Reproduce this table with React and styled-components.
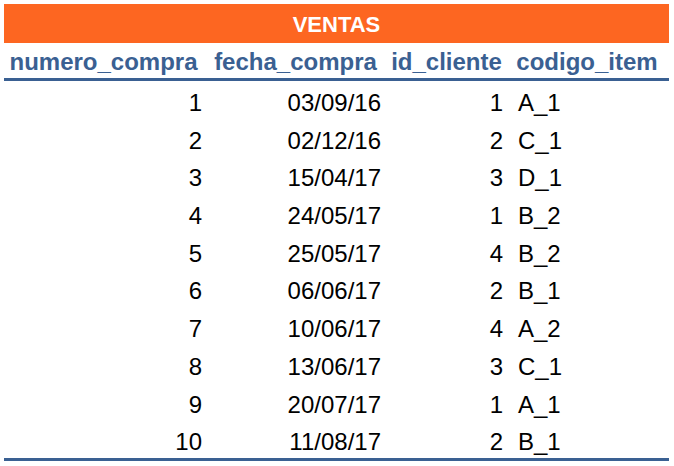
import React from 'react';
import styled, { createGlobalStyle } from 'styled-components';

const GlobalStyle = createGlobalStyle`
  html, body {
    margin: 0;
    padding: 0;
    background: #ffffff;
  }
  body {
    font-family: "Liberation Sans", Arial, sans-serif;
  }
`;

const ventas = [
  [1, '03/09/16', 1, 'A_1'],
  [2, '02/12/16', 2, 'C_1'],
  [3, '15/04/17', 3, 'D_1'],
  [4, '24/05/17', 1, 'B_2'],
  [5, '25/05/17', 4, 'B_2'],
  [6, '06/06/17', 2, 'B_1'],
  [7, '10/06/17', 4, 'A_2'],
  [8, '13/06/17', 3, 'C_1'],
  [9, '20/07/17', 1, 'A_1'],
  [10, '11/08/17', 2, 'B_1'],
];

const headers = ['numero_compra', 'fecha_compra', 'id_cliente', 'codigo_item'];

// alineacion de cada columna en las filas de datos
const cols = [
  { align: 'right', pad: '0 1px 0 0' },
  { align: 'right', pad: '0 7px 0 0' },
  { align: 'right', pad: '0 2px 0 0' },
  { align: 'left', pad: '0 0 0 13px' },
];

const App = () => {
  return (
    <Page>
      <GlobalStyle />
      <Sheet>
        <Title>VENTAS</Title>
        <Table>
          <HeaderRow>
            {headers.map((h) => (
              <HeaderCell key={h}>{h}</HeaderCell>
            ))}
          </HeaderRow>
          <Body>
            {ventas.map((row) => (
              <Row key={row[0]}>
                {row.map((value, i) => (
                  <Cell key={i} align={cols[i].align} pad={cols[i].pad}>
                    {value}
                  </Cell>
                ))}
              </Row>
            ))}
          </Body>
        </Table>
      </Sheet>
    </Page>
  );
};

const Page = styled.div`
  width: 674px;
  height: 466px;
  padding: 4px 5px 0 4px;
  box-sizing: border-box;
  background: #ffffff;
`;

const Sheet = styled.div`
  width: 665px;
  display: flex;
  flex-direction: column;
`;

const Title = styled.div`
  height: 39px;
  box-sizing: border-box;
  padding-top: 2px;
  line-height: 37px;
  background: #fd6621;
  color: #ffffff;
  font-size: 22px;
  font-weight: bold;
  text-align: center;
`;

const Table = styled.div`
  display: flex;
  flex-direction: column;
`;

const gridCols = `
  display: grid;
  grid-template-columns: 199px 185px 117px 164px;
`;

const HeaderRow = styled.div`
  ${gridCols}
  padding-top: 2px;
  border-bottom: 3px solid #3a6092;
`;

const HeaderCell = styled.div`
  line-height: 33px;
  font-size: 24px;
  font-weight: bold;
  color: #3a6092;
  text-align: center;
  white-space: nowrap;
`;

const Body = styled.div`
  display: flex;
  flex-direction: column;
  border-bottom: 3px solid #3a6092;
`;

const Row = styled.div`
  ${gridCols}
  height: 37.7px;
  box-sizing: border-box;
  padding-top: 6px;
`;

const Cell = styled.div`
  line-height: 31.7px;
  font-size: 24px;
  color: #000000;
  text-align: ${({ align }) => align};
  padding: ${({ pad }) => pad};
  white-space: nowrap;
`;

export default App;
